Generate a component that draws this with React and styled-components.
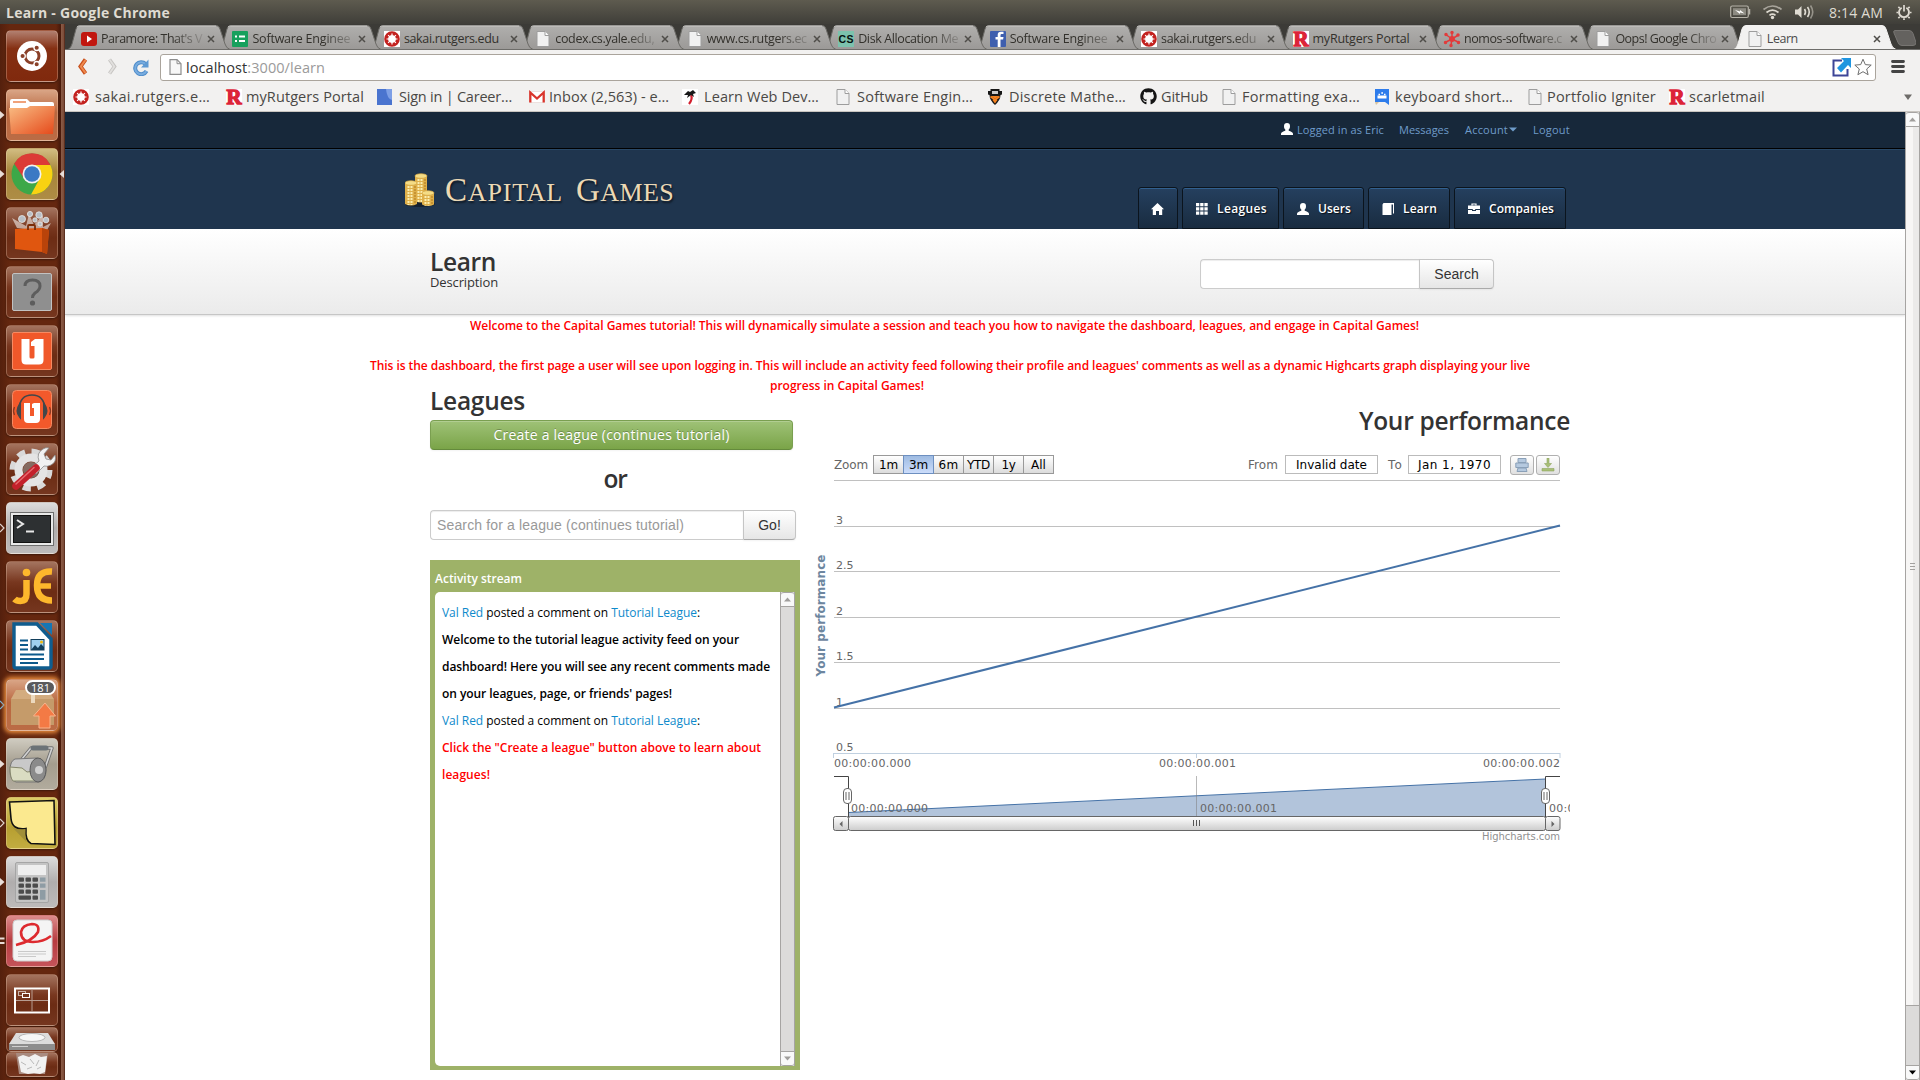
import React, { useLayoutEffect, useRef, useState } from "react";
import styled, { createGlobalStyle, css } from "styled-components";
import { FaGithub } from "react-icons/fa";

const ui = `"Open Sans", "Noto Sans", sans-serif`;
const arial = `"Liberation Sans", Arial, sans-serif`;
const verdana = `"DejaVu Sans", Verdana, sans-serif`;

const Global = createGlobalStyle`
  * { box-sizing: border-box; }
  body { margin: 0; background: #fff; overflow: hidden; font-family: ${ui}; }
  svg { display: block; flex: none; }
`;

/* ---------- text tracked out to a given measure ---------- */
const Span = styled.span`
  display: inline-block;
  white-space: pre;
  flex: none;
`;
function Fit({ w, children, ...rest }) {
  const ref = useRef(null);
  const [ls, setLs] = useState(0);
  useLayoutEffect(() => {
    const natural = ref.current.getBoundingClientRect().width;
    setLs((w - natural) / ref.current.textContent.length);
  }, [w]);
  return (
    <Span ref={ref} style={{ letterSpacing: ls }} {...rest}>
      {children}
    </Span>
  );
}

/* ---------- desktop ---------- */
const Desktop = styled.div`
  width: 1920px;
  height: 1080px;
  display: flex;
  flex-direction: column;
  background: #3c3b37;
`;
const MenuBar = styled.div`
  height: 24px;
  flex: none;
  display: flex;
  align-items: center;
  justify-content: space-between;
  padding: 0 8px 0 6px;
  color: #dfdbd2;
  font-size: 14px;
  background: linear-gradient(#5e5b4f, #3f3e39);
`;
const WindowTitle = styled.div`
  font-weight: 700;
`;
const Indicators = styled.div`
  display: flex;
  align-items: center;
`;
const Slot = styled.span`
  display: flex;
  margin-left: ${(p) => p.$l || 0}px;
`;
const Body = styled.div`
  flex: 1;
  min-height: 0;
  display: flex;
`;

/* ---------- launcher ---------- */
const Launcher = styled.div`
  width: 65px;
  flex: none;
  padding: 6px 0 0 0;
  display: flex;
  flex-direction: column;
  gap: 7px;
  background: linear-gradient(90deg, #54200d 0, #65270f 10px, #65270f 56px, #4b1b0b 60px, #4b1b0b 61px, #8a5c48 61px, #7b4a36 64px, #3d1509 65px);
`;
const LauncherRow = styled.div`
  display: flex;
  align-items: center;
  height: ${(p) => p.$h || 52}px;
  flex: none;
`;
const Mark = styled.div`
  width: 6px;
  height: 12px;
  display: flex;
  align-items: center;
`;
const tile = {
  brown: "linear-gradient(#a4745f, #78371f 40%, #6c2c14 60%, #75361f)",
  ubuntu: "linear-gradient(#b28070, #853013 35%, #80290d)",
  orange: "linear-gradient(#d9a586, #b9673f 45%, #bb6c45)",
  gold: "linear-gradient(#d2bd82, #a7853a 45%, #ae8d45)",
  silver: "linear-gradient(#dcdcdc, #b0adad 50%, #bdbbbb)",
  stone: "linear-gradient(#cfcbc0, #a49d8e 50%, #b1ab9d)",
  yellow: "linear-gradient(#dccc67, #b79f31 60%, #c2ac40)",
  red: "linear-gradient(#dc8b8b, #b83c40 50%, #c4545a)",
};
const Tile = styled.div`
  width: 52px;
  height: ${(p) => p.$h || 52}px;
  flex: none;
  border-radius: 5px;
  border: 1px solid rgba(255, 225, 205, 0.28);
  background: ${(p) => tile[p.$tone]};
  box-shadow: ${(p) => (p.$glow ? "0 0 4px 2px #e98c3c" : "0 1px 2px rgba(0,0,0,.4)")};
  display: flex;
  align-items: center;
  justify-content: center;
  position: relative;
`;
const Count = styled.span`
  position: absolute;
  top: 0;
  right: 1px;
  width: 31px;
  height: 15px;
  border: 2px solid #fff;
  border-radius: 8px;
  background: #5a5a5c;
  color: #fff;
  font-size: 11px;
  line-height: 11px;
  text-align: center;
`;
const Dock = styled.div`
  display: flex;
  flex-direction: column;
  flex: none;
  margin-top: -6px;
  padding-left: 6px;
`;

function LauncherItem({ tone, mark, right, glow, children, count }) {
  return (
    <LauncherRow>
      <Mark>
        {mark && (
          <svg width="6" height="12" viewBox="0 0 6 12">
            {mark === "solid" && <path d="M0 2l4.500 4L0 10z" fill="#e8ddd8" />}
            {mark === "hollow" && <path d="M0 2l4 4-4 4" fill="none" stroke="#e0d4ce" strokeWidth="1.200" />}
            {mark === "blue" && <path d="M0 2l4 4-4 4" fill="none" stroke="#6cb4e4" strokeWidth="1.200" />}
            {mark === "bars" && <path d="M0 3.500h4.500M0 8h4.500" stroke="#e8ddd8" strokeWidth="2.200" />}
          </svg>
        )}
      </Mark>
      <Tile $tone={tone} $glow={glow}>
        {children}
        {count && <Count>{count}</Count>}
      </Tile>
      {right && (
        <svg width="6" height="12" viewBox="0 0 6 12">
          <path d="M6 2L1.500 6 6 10z" fill="#e8ddd8" />
        </svg>
      )}
    </LauncherRow>
  );
}
const Art = ({ children, h = 50 }) => (
  <svg width="50" height={h} viewBox={`0 0 50 ${h}`}>
    {children}
  </svg>
);

function LauncherBar() {
  return (
    <Launcher>
      <LauncherItem tone="ubuntu">
        <Art>
          <circle cx="25" cy="25" r="15" fill="#fff" />
          <circle cx="25" cy="25" r="7" fill="none" stroke="#8a4028" strokeWidth="3" />
          <g fill="#8a4028" stroke="#fff" strokeWidth="1.300">
            <circle cx="15.600" cy="25" r="2.700" />
            <circle cx="29.700" cy="16.800" r="2.700" />
            <circle cx="29.700" cy="33.200" r="2.700" />
          </g>
        </Art>
      </LauncherItem>
      <LauncherItem tone="orange" mark="solid">
        <Art>
          <path d="M3 11q0-2 2-2h15l3 3h22q2 0 2 2v6H3z" fill="#fff" />
          <path d="M6 11h13v2H6z" fill="#f0a27a" />
          <linearGradient id="fold" x2="1" y2="1">
            <stop stopColor="#f9bd84" />
            <stop offset="1" stopColor="#e5491a" />
          </linearGradient>
          <path d="M2 18h18l3-2h25l-2 28H4z" fill="url(#fold)" />
        </Art>
      </LauncherItem>
      <LauncherItem tone="gold" mark="solid" right>
        <Art>
          <circle cx="25" cy="25" r="20.500" fill="#3da848" />
          <path d="M25 25L7.200 14.700A20.500 20.500 0 0 1 42.800 14.700L43 16H25z" fill="#dc3b36" />
          <path d="M25 16H43.400A20.500 20.500 0 0 1 24 45.500L33 29z" fill="#f9d211" />
          <path d="M7.200 14.700L17 29.500 25 25 25 16z" fill="#dc3b36" />
          <circle cx="25" cy="25" r="9.500" fill="#f2f2f2" />
          <circle cx="25" cy="25" r="7.800" fill="#3b79c4" />
        </Art>
      </LauncherItem>
      <LauncherItem tone="brown">
        <Art>
          <path d="M10 20L5 10l14 8 3-12 5 11 9-10v12l8-4-5 9z" fill="#fff" opacity=".55" />
          <g fill="#b9bfc6" stroke="#e9e9e9" strokeWidth=".8">
            <circle cx="15" cy="11" r="3.500" />
            <circle cx="23" cy="6" r="2.600" />
            <circle cx="32" cy="7" r="3.200" />
            <circle cx="39" cy="12" r="2.800" />
            <circle cx="28" cy="12" r="2.200" />
            <circle cx="33" cy="16" r="2" />
          </g>
          <path d="M8 21l27-1 7 2-2 24-5-2-27-3z" fill="#e0560f" />
          <path d="M35 20l7 2-2 24-5-2z" fill="#b9430a" />
          <path d="M21 22v-4q0-1 1-1h5q1 0 1 1v4" fill="none" stroke="#7c2c07" strokeWidth="1.800" />
        </Art>
      </LauncherItem>
      <LauncherItem tone="brown">
        <Art>
          <rect x="5.500" y="6.500" width="39" height="37" rx="1.500" fill="#8f8f8f" stroke="#c2c2c2" />
          <path d="M18 19q0-6 7.500-6t7.500 6q0 4-5 7-2.500 2-2.500 5" fill="none" stroke="#5d5d5d" strokeWidth="3" />
          <circle cx="25.500" cy="36" r="2.600" fill="#5d5d5d" />
        </Art>
      </LauncherItem>
      <LauncherItem tone="brown">
        <Art>
          <rect x="5.500" y="6.500" width="39" height="37" rx="1.500" fill="#f0582a" stroke="#f78a62" />
          <path d="M14.500 13h8v18q0 1.500 1.500 1.500h2Q27.500 32.500 27.500 31V20h-3.500v-4l4-3h8.500v21q0 4.500-4.500 4.500H19q-4.500 0-4.500-4.500z" fill="#fff" />
        </Art>
      </LauncherItem>
      <LauncherItem tone="brown">
        <Art>
          <rect x="5.500" y="5.500" width="39" height="38" rx="4" fill="#f3592b" stroke="#f78a62" />
          <path d="M12 24Q13 10 25 10t13 14" fill="none" stroke="#43474a" strokeWidth="1.600" />
          <path d="M13 19v13q-5-6 0-13zM37 19v13q5-6 0-13z" fill="#43474a" stroke="#43474a" strokeWidth="2" />
          <path d="M7.500 22q-2 4 0 8M42.500 22q2 4 0 8" fill="none" stroke="#8a3a22" strokeWidth="1.300" />
          <path d="M17 18h6v13h4v-8h-2v-4l2-1h6v16q0 4-4 4h-8q-4 0-4-4z" fill="#fff" />
        </Art>
      </LauncherItem>
      <LauncherItem tone="brown">
        <Art>
          <circle cx="24" cy="26" r="18.500" fill="none" stroke="#d9d9d9" strokeWidth="6" strokeDasharray="8 6.530" />
          <circle cx="24" cy="26" r="12.500" fill="none" stroke="#e4e4e4" strokeWidth="8" />
          <circle cx="24" cy="26" r="8" fill="#8f8f8f" opacity=".6" />
          <path d="M23 25l9-8q-3-8 4-12 3-2 6-1l-5 6 2 5 5 1 4-5q2 7-4 10-4 2-7 1l-8 8z" fill="#f2f2f2" stroke="#8b8b8b" strokeWidth=".8" />
          <path d="M9 42L29 24" stroke="#c3212b" strokeWidth="7.500" strokeLinecap="round" />
          <path d="M9 40L27 23.500" stroke="#e66a6e" strokeWidth="1.500" strokeLinecap="round" />
        </Art>
      </LauncherItem>
      <LauncherItem tone="silver" mark="hollow">
        <Art>
          <rect x="3.500" y="9.500" width="43" height="33" fill="#e9e9e9" stroke="#6f6f6f" />
          <rect x="6.500" y="12.500" width="37" height="27" fill="#2d3032" stroke="#111" />
          <path d="M10 17l6 4-6 4" fill="none" stroke="#e8e8e8" strokeWidth="2" />
          <path d="M19 28.500h8" stroke="#e8e8e8" strokeWidth="2" />
        </Art>
      </LauncherItem>
      <LauncherItem tone="brown">
        <Art>
          <g fill="none" stroke="#fdb72c" strokeWidth="6.500">
            <path d="M19.500 18v14q0 7-6 7-4 0-6-2" />
            <path d="M45 9.500q-15-1-15 14t15 15" />
            <path d="M30 24h14" strokeWidth="5.500" />
          </g>
          <circle cx="19.500" cy="10.500" r="3.800" fill="#fdb72c" />
        </Art>
      </LauncherItem>
      <LauncherItem tone="brown">
        <Art>
          <path d="M7 3h23l14 15v27q0 2-2 2H9q-2 0-2-2z" fill="#fff" stroke="#0f5d8f" strokeWidth="3.400" />
          <path d="M33 2h12v12z" fill="#1576b4" />
          <path d="M13 19.500h8M13 24h8M13 28.500h8M13 33.500h24M13 38h24M13 42h18" stroke="#0d5a8c" strokeWidth="2" />
          <rect x="24" y="18.500" width="13" height="10.500" fill="#9ed1f0" stroke="#123f5c" />
          <path d="M24 29l4-5 3 3 3-4 3 3v3z" fill="#123f5c" />
          <circle cx="34.500" cy="21" r="1.500" fill="#f2b90f" />
        </Art>
      </LauncherItem>
      <LauncherItem tone="orange" mark="blue" glow count="181">
        <Art>
          <path d="M9 10h32l6 9v26H4V19z" fill="#d3ac7f" />
          <path d="M4 19h43v26H4z" fill="#c59b6a" />
          <path d="M24 10h4v13h-4z" fill="#ecd9be" />
          <path d="M38 23l10.500 13H43v12H32V36h-5.500z" fill="#f37a45" stroke="#f9b48c" />
        </Art>
      </LauncherItem>
      <LauncherItem tone="stone" mark="solid">
        <Art>
          <path d="M15 20L24 9h21l-7 20" fill="none" stroke="#6f6f6f" strokeWidth="3.400" strokeLinejoin="round" />
          <path d="M15 20L24 9h21l-7 20" fill="none" stroke="#d2d2d2" strokeWidth="1.600" strokeLinejoin="round" />
          <path d="M26 9h13" stroke="#6c7377" strokeWidth="5" strokeLinecap="round" />
          <path d="M8 20l22-1q9 2 9 12 0 10-7 12H9q-6-2-6-11.500T8 20z" fill="#c9c9c9" stroke="#777" />
          <path d="M3 28l12 1 5 4 8-1v10H6q-3-3-3-14z" fill="#dadcc2" stroke="#85866c" />
          <ellipse cx="31" cy="31" rx="8" ry="12" fill="#8b8b8b" stroke="#5c5c5c" />
          <circle cx="32" cy="31" r="4" fill="#d0d0d0" />
        </Art>
      </LauncherItem>
      <LauncherItem tone="yellow" mark="hollow">
        <Art>
          <path d="M2.500 4L47 2.500 48 46.500 24 45.500q-6-3-5-15-14 2-15-10z" fill="#fbe98f" stroke="#111" strokeWidth="1.600" />
          <path d="M4 28q5 5 14.500 3-1 7 1 13z" fill="#a08f39" />
        </Art>
      </LauncherItem>
      <LauncherItem tone="silver" mark="solid">
        <Art>
          <rect x="8.500" y="5.500" width="33" height="40" rx="1.500" fill="#c4c4c4" stroke="#a5a5a5" />
          <rect x="11" y="8" width="28" height="10" fill="#eeeeee" />
          {[0, 1, 2].map((r) =>
            [0, 1, 2].map((c) => <rect key={`${r}${c}`} x={11.5 + c * 7} y={20.5 + r * 6} width="5.500" height="4.300" rx="1" fill="#4c4c4c" />)
          )}
          <rect x="11.500" y="38.500" width="12.500" height="4.300" rx="1" fill="#4c4c4c" />
          <rect x="25.500" y="38.500" width="5.500" height="4.300" rx="1" fill="#4c4c4c" />
          <path d="M33 20.500h5.500v4.300H33zM33 26.500h5.500v4.300H33zM33 33h5.500v9.800H33z" fill="#8e9ca4" />
        </Art>
      </LauncherItem>
      <LauncherItem tone="red" mark="bars">
        <Art>
          <rect x="6" y="4" width="39" height="41" rx="4" fill="#f4f4f4" stroke="#cfcfcf" />
          <path d="M9 29q17-4 22-13 2-8-6-8-10 1-11 8 0 10 12 10 10 0 18-6" fill="none" stroke="#dd2a2f" strokeWidth="2.600" />
          <path d="M11 35.500h28M11 38h28M11 40.500h18" stroke="#c9c9c9" />
        </Art>
      </LauncherItem>
      <LauncherItem tone="brown">
        <Art>
          <rect x="8" y="13.500" width="34" height="24" fill="none" stroke="#fff" strokeWidth="2" />
          <path d="M25 14.500v22M9 25.500h32" stroke="#b79c90" />
          <rect x="11.500" y="16.500" width="7" height="4" fill="none" stroke="#c9b3a9" />
          <rect x="15.500" y="18.500" width="7" height="4" fill="#72341d" stroke="#fff" />
        </Art>
      </LauncherItem>
      <Dock>
        <Tile $tone="brown" $h={25}>
          <Art h={23}>
            <path d="M9 5h32l7 11H2z" fill="#dcdcdc" />
            <ellipse cx="25" cy="9.500" rx="13" ry="4" fill="#f6f6f6" stroke="#b5b5b5" />
            <path d="M2 16h46v6H2z" fill="#8d8d8d" />
            <path d="M5 18.500h16" stroke="#d0d0d0" />
          </Art>
        </Tile>
        <Tile $tone="brown" $h={25}>
          <Art h={23}>
            <path d="M9 0h32l-3 21H12z" fill="#a98b80" />
            <path d="M11 4l5-2 6 2 6-3 6 3 6-1-2 16-5 2-6-1-6 1-7-2z" fill="#f1f1f1" />
            <path d="M14 9l5 3M23 6l4 5M32 7l-3 6M20 16l5-2M34 14l-4 2" stroke="#b9b9b9" />
          </Art>
        </Tile>
      </Dock>
    </Launcher>
  );
}

/* ---------- small favicons ---------- */
const Icon = ({ w = 16, h = 16, children }) => (
  <svg width={w} height={h} viewBox="0 0 16 16" overflow="visible">
    {children}
  </svg>
);
const Favicon = {
  youtube: (
    <Icon>
      <rect y="1" width="16" height="14" rx="3" fill="#c1170f" />
      <path d="M6 4.500l5 3.500-5 3.500z" fill="#fff" />
    </Icon>
  ),
  sheet: (
    <Icon>
      <rect width="16" height="16" rx="1" fill="#17a05d" />
      <path d="M3 5.500h2M7 5.500h6M3 10h2M7 10h6" stroke="#fff" strokeWidth="1.800" />
    </Icon>
  ),
  sakai: (
    <Icon>
      <rect width="16" height="16" fill="#fff" />
      <circle cx="8" cy="8" r="5.800" fill="none" stroke="#c3221f" strokeWidth="4" />
      <path d="M8 2.500v11M2.500 8h11M4.100 4.100l7.800 7.800M11.900 4.100l-7.800 7.800" stroke="#fff" strokeWidth="1.200" />
      <circle cx="8" cy="8" r="3.400" fill="#fff" />
    </Icon>
  ),
  page: (
    <Icon>
      <path d="M2 .5h8l4 4v11H2z" fill="#f1f1f1" stroke="#9d9d9d" />
      <path d="M10 .5v4h4" fill="#fff" stroke="#9d9d9d" />
    </Icon>
  ),
  cs: (
    <Icon>
      <rect width="16" height="16" fill="#7cc2ad" />
      <text x="0.500" y="12" fontFamily="Liberation Sans, sans-serif" fontWeight="700" fontSize="10.500" textLength="15" fill="#06110e">CS</text>
    </Icon>
  ),
  facebook: (
    <Icon>
      <rect width="16" height="16" rx="1" fill="#3f5fae" />
      <path d="M13.500 3h-2q-1 0-1 1.200V6h3l-.4 2.500h-2.600V16H7.700V8.500H5.500V6h2.200V4Q7.700.8 11 .8h2.500z" fill="#fff" />
    </Icon>
  ),
  rutgers: (
    <Icon>
      <rect width="16" height="16" fill="#fff" />
      <text x="0.500" y="14.500" fontFamily="Liberation Serif, serif" fontWeight="700" fontSize="20" textLength="15" lengthAdjust="spacingAndGlyphs" fill="#dc2338" stroke="#dc2338" strokeWidth="1.300">R</text>
    </Icon>
  ),
  nomos: (
    <Icon>
      <g stroke="#e23b3b" strokeWidth="1.500" fill="#e23b3b">
        <path d="M8 8V2M8 8l5.500-3.500M8 8l6 3M8 8l-1 6M8 8l-6 3M8 8L2.500 4" />
        <circle cx="8" cy="8" r="2.200" />
        <circle cx="8" cy="1.500" r="1" /><circle cx="14" cy="4" r="1" /><circle cx="14.500" cy="11.500" r="1" />
        <circle cx="7" cy="14.500" r="1" /><circle cx="1.500" cy="11.500" r="1" /><circle cx="2" cy="3.500" r="1" />
      </g>
    </Icon>
  ),
  blue: (
    <Icon>
      <rect width="15" height="16" fill="#4a74cf" />
      <path d="M9 0h6v11q-5-1-6-11z" fill="#7d9fe6" />
    </Icon>
  ),
  gmail: (
    <Icon>
      <rect x="1" y="2.500" width="14" height="11" fill="#fff" stroke="#e2c9c6" strokeWidth=".5" />
      <path d="M1.300 13.500V3.500L8 9.500l6.700-6v10" fill="none" stroke="#d9342b" strokeWidth="2.300" />
    </Icon>
  ),
  palm: (
    <Icon>
      <rect width="16" height="16" fill="#fff" />
      <path d="M9 6q2 4-2 9" stroke="#d2202e" strokeWidth="2.200" fill="none" />
      <path d="M2 6l4-4 2 1 3-2 3 3-3 1 1 3-3-2-4 3 1-3z" fill="#171717" />
    </Icon>
  ),
  shield: (
    <Icon>
      <path d="M3.500 0h9v2H15v3.500l-1.500.5q0 5-5.500 10Q2.500 11 2.500 6L1 5.500V2h2.500z" fill="#161616" />
      <path d="M4 7h8L8 10zM5.500 11L8 9.500l2.500 1.500L8 14.500z" fill="#f58220" />
      <path d="M5 2h6v3H5z" fill="#c9c9c9" />
      <path d="M3.500 7.500L8 11l4.500-3.500" fill="none" stroke="#f58220" strokeWidth="1.600" />
    </Icon>
  ),
  github: <FaGithub size={17} color="#151515" />,
  keyboard: (
    <Icon>
      <path d="M1 0h14v16l-4-3H1z" fill="#2e7ceb" />
      <path d="M3.500 9.500h9V6.500h-9z" fill="#fff" />
      <path d="M4.500 5.500H6M7.300 4H9M10 5.500h1.500" stroke="#fff" strokeWidth="1.700" />
      <path d="M1 13h4l-3 3z" fill="#d8c29b" />
    </Icon>
  ),
};

/* ---------- browser chrome ---------- */
const Browser = styled.div`
  flex: 1;
  min-width: 0;
  display: flex;
  flex-direction: column;
`;
const TabStrip = styled.div`
  height: 26px;
  flex: none;
  display: flex;
  padding-left: 3px;
  overflow: hidden;
  background: #3c3b37;
  border-bottom: 1px solid #6e6d6a;
`;
const TabCell = styled.div`
  flex: 0 0 151.45px;
  height: 25px;
  position: relative;
  z-index: ${(p) => p.$z};
  display: flex;
  align-items: center;
  padding: 4px 0 0 13px;
  font-size: 12.5px;
  color: ${(p) => (p.$on ? "#4b4b4b" : "#33312c")};
`;
const TabShape = styled.svg`
  position: absolute;
  left: 0;
  top: 1px;
  z-index: -1;
`;
const TabText = styled.div`
  width: 102px;
  margin-left: 4px;
  line-height: 18px;
  ${(p) =>
    p.$fade &&
    css`
      mask-image: linear-gradient(90deg, #000 70%, rgba(0, 0, 0, 0.15) 100%);
    `}
`;
const NewTab = styled.div`
  padding: 6px 0 0 2px;
`;
const Toolbar = styled.div`
  height: 32px;
  flex: none;
  display: flex;
  align-items: center;
  padding: 2px 15px 0 9px;
  background: #f2f1f0;
`;
const Omnibox = styled.div`
  width: 1718px;
  height: 27px;
  margin-left: 10px;
  padding: 0 3px 0 8px;
  display: flex;
  align-items: center;
  border: 1px solid #aaa49c;
  border-radius: 3px;
  background: #fff;
  font-size: 14.5px;
  color: #333;
`;
const Url = styled.div`
  flex: 1;
  padding-left: 4px;
  color: #9a9a9a;
  b {
    font-weight: 400;
    color: #333;
  }
`;
const Bookmarks = styled.div`
  height: 30px;
  flex: none;
  display: flex;
  align-items: center;
  background: #f2f1f0;
  border-bottom: 1px solid #c9c5c0;
  color: #4a4845;
  font-size: 14.5px;
`;
const Bookmark = styled.div`
  flex: none;
  width: ${(p) => p.$w}px;
  display: flex;
  align-items: center;
`;
const BookmarkIcon = styled.span`
  display: flex;
  width: ${(p) => p.$w}px;
  flex: none;
`;

const tabs = [
  ["youtube", "Paramore: That's V", 101, true],
  ["sheet", "Software Enginee", 98, true],
  ["sakai", "sakai.rutgers.edu", 95],
  ["page", "codex.cs.yale.edu,", 99, true],
  ["page", "www.cs.rutgers.ec", 100, true],
  ["cs", "Disk Allocation Me", 100, true],
  ["facebook", "Software Enginee", 98, true],
  ["sakai", "sakai.rutgers.edu", 95, true],
  ["rutgers", "myRutgers Portal", 97],
  ["nomos", "nomos-software.c", 98, true],
  ["page", "Oops! Google Chro", 101, true],
  ["page", "Learn", 31],
];
/* icon, label, icon x, text x, text width */
const marks = [
  ["sakai", "sakai.rutgers.e…", 73, 95, 115],
  ["rutgers", "myRutgers Portal", 226, 246, 118],
  ["blue", "Sign in | Career…", 377, 399, 113],
  ["gmail", "Inbox (2,563) - e…", 529, 549, 120],
  ["palm", "Learn Web Dev…", 682, 704, 115],
  ["page", "Software Engin…", 835, 857, 116],
  ["shield", "Discrete Mathe…", 987, 1009, 117],
  ["github", "GitHub", 1140, 1161, 47],
  ["page", "Formatting exa…", 1221, 1242, 118],
  ["keyboard", "keyboard short…", 1374, 1395, 118],
  ["page", "Portfolio Igniter", 1527, 1547, 109],
  ["rutgers", "scarletmail", 1669, 1689, 76],
];

function Chrome() {
  return (
    <>
      <TabStrip>
        {tabs.map(([icon, text, w, fade], i) => {
          const on = i === tabs.length - 1;
          return (
            <TabCell key={i} $z={on ? 30 : 20 - i} $on={on}>
              <TabShape width="165" height="25" viewBox="0 0 165 25">
                <linearGradient id="tabfill" x2="0" y2="1">
                  <stop stopColor="#b0afad" />
                  <stop offset="1" stopColor="#9b9997" />
                </linearGradient>
                <path
                  d="M0 24.500Q3 23 4 19L8 4Q9 .5 12 .5H148Q151 .5 152 4l5 15q1 4 5 5.500z"
                  fill={on ? "#f2f1f0" : "url(#tabfill)"}
                  stroke={on ? "#f2f1f0" : "#6c6b67"}
                />
                {!on && <path d="M9 2q1-1 3-1H148" stroke="#c9c8c6" fill="none" />}
              </TabShape>
              {Favicon[icon]}
              <TabText $fade={fade}>
                <Fit w={w}>{text}</Fit>
              </TabText>
              <Slot $l={4}>
                <svg width="8" height="8" viewBox="0 0 8 8">
                  <path d="M1 1l6 6M7 1L1 7" stroke="#4f4d49" strokeWidth="1.500" />
                </svg>
              </Slot>
            </TabCell>
          );
        })}
        <NewTab>
          <svg width="29" height="17" viewBox="0 0 29 17">
            <path d="M8 .5h14q3 0 4 3l3 9q0 3-3 3H15q-3 0-4-3L7 3Q6 .5 8 .5z" fill="#64625f" stroke="#777572" />
          </svg>
        </NewTab>
      </TabStrip>
      <Toolbar>
        <svg width="16" height="20" viewBox="0 0 16 20">
          <path d="M11.500 2.500L6.500 9.500l5 7" fill="none" stroke="#c8501c" strokeWidth="4" />
          <path d="M11.500 3L6.800 9.500l4.700 6.500" fill="none" stroke="#f08a4e" strokeWidth="2" />
        </svg>
        <Slot $l={15}>
          <svg width="16" height="20" viewBox="0 0 16 20">
            <path d="M4.500 2.500L9.500 9.500l-5 7" fill="none" stroke="#c6c4c1" strokeWidth="3.600" />
            <path d="M4.500 2.500L9.300 9.500l-4.800 7" fill="none" stroke="#e2e0de" strokeWidth="1.800" />
          </svg>
        </Slot>
        <Slot $l={11}>
          <svg width="18" height="18" viewBox="0 0 18 18">
            <path d="M13.500 6A6 6 0 1 0 14.500 13" fill="none" stroke="#4f8cc9" strokeWidth="4" />
            <path d="M13.500 6A6 6 0 1 0 14.500 13" fill="none" stroke="#78acdf" strokeWidth="2" />
            <path d="M16.500 1.500v8H9z" fill="#5f9ad3" />
          </svg>
        </Slot>
        <Omnibox>
          <svg width="13" height="16" viewBox="0 0 13 16">
            <path d="M1 .7h7l4 4v10.600H1z" fill="#f7f7f7" stroke="#8e8e8e" strokeWidth="1.200" />
            <path d="M8 .7v4h4" fill="none" stroke="#8e8e8e" />
          </svg>
          <Url>
            <Fit w={139}>
              <b>localhost</b>:3000/learn
            </Fit>
          </Url>
          <svg width="20" height="20" viewBox="0 0 20 20">
            <path d="M10 3.500H1.500v15h14V12" fill="#fff" stroke="#3d4597" strokeWidth="2" />
            <path d="M9 1h10v10l-3-3-7 7.500L5 11l7-7z" fill="#1f95e0" />
          </svg>
          <Slot $l={2}>
            <svg width="18" height="18" viewBox="0 0 18 18">
              <path d="M9 1.200l2.300 5.400 5.900.5-4.500 3.900 1.400 5.700L9 13.700l-5.100 3 1.400-5.700L.8 7.100l5.900-.5z" fill="#fff" stroke="#6e6e6e" />
            </svg>
          </Slot>
        </Omnibox>
        <Slot $l={15}>
          <svg width="14" height="14" viewBox="0 0 14 14">
            <path d="M1.500 1.500h11M1.500 6.500h11M1.500 11.500h11" stroke="#444" strokeWidth="2.800" strokeLinecap="round" />
          </svg>
        </Slot>
      </Toolbar>
      <Bookmarks>
        <Bookmark $w={8} />
        {marks.map(([icon, label, ix, tx, w], i) => (
          <Bookmark key={i} $w={(marks[i + 1] ? marks[i + 1][2] : 1903) - ix}>
            <BookmarkIcon $w={tx - ix}>{Favicon[icon]}</BookmarkIcon>
            <Fit w={w}>{label}</Fit>
          </Bookmark>
        ))}
        <svg width="10" height="8" viewBox="0 0 10 8">
          <path d="M1 1.500h8L5 7z" fill="#6e6c69" />
        </svg>
      </Bookmarks>
    </>
  );
}

/* ---------- scrollbars ---------- */
const Bar = styled.div`
  width: 15px;
  flex: none;
  display: flex;
  flex-direction: column;
  background: #dcdbda;
  border: solid #a6a4a2;
  border-width: 0 1px;
`;
const BarButton = styled.div`
  height: 15px;
  flex: none;
  display: flex;
  align-items: center;
  justify-content: center;
  background: #f9f9f9;
  border: solid #a6a4a2;
  border-width: 1px 0;
  border-radius: ${(p) => (p.$end ? "0 0 3px 3px" : "3px 3px 0 0")};
`;
const BarSpace = styled.div`
  flex: 1;
`;
const Thumb = styled.div`
  height: 879px;
  flex: none;
  display: flex;
  align-items: center;
  justify-content: center;
  background: linear-gradient(90deg, #f7f6f5 7px, #ebeae9 7px);
  border-bottom: 1px solid #a6a4a2;
`;
const Arrow = ({ down, dark }) => (
  <svg width="7" height="5" viewBox="0 0 7 5">
    <path d={down ? "M0 .5h7L3.500 4.500z" : "M0 4.500h7L3.500.5z"} fill={dark ? "#000" : "#a09e9c"} />
  </svg>
);

/* ---------- page ---------- */
const Viewport = styled.div`
  flex: 1;
  min-height: 0;
  display: flex;
  background: #fff;
`;
const Page = styled.div`
  flex: 1;
  min-width: 0;
  overflow: hidden;
`;
const AccountBar = styled.div`
  height: 37px;
  display: flex;
  align-items: center;
  padding: 0 0 2px 1216px;
  background: #17283a;
  border-bottom: 1px solid #000;
  color: #6f9cca;
  font-size: 11px;
`;
const Header = styled.div`
  height: 80px;
  display: flex;
  align-items: flex-end;
  background: #1f354e;
  border-top: 1px solid #294866;
`;
const Brand = styled.div`
  width: 733px;
  height: 56px;
  margin-left: 340px;
  display: flex;
  align-items: flex-start;
`;
const Wordmark = styled.div`
  display: flex;
  gap: 13px;
  margin: -2px 0 0 9px;
  align-items: baseline;
  font-family: "Liberation Serif", serif;
  font-size: 26px;
  line-height: 38px;
  color: #ecd9b5;
  text-shadow: 1px 2px 2px rgba(0, 0, 0, 0.6);
`;
const Initial = styled.span`
  font-size: 33px;
`;
const Nav = styled.div`
  display: flex;
  gap: 4px;
`;
const NavButton = styled.div`
  width: ${(p) => p.$w}px;
  height: 42px;
  display: flex;
  align-items: center;
  padding: 1px 0 0 ${(p) => p.$pl || 13}px;
  border: 1px solid #0b141d;
  border-radius: 3px 3px 0 0;
  background: linear-gradient(#25405f, #192c40);
  box-shadow: inset 0 1px 0 #31608f;
  color: #fff;
  font-size: 12px;
  font-weight: 600;
  text-shadow: 1px 1px 1px rgba(0, 0, 0, 0.7);
`;
const NavLabel = styled.span`
  margin: -1px 0 0 9px;
`;
const SubHeader = styled.div`
  height: 86px;
  display: flex;
  padding-left: 365px;
  background: linear-gradient(#fff, #ebebeb);
  border-bottom: 1px solid #c6c6c6;
  box-shadow: 0 1px 2px rgba(0, 0, 0, 0.12);
`;
const Titles = styled.div`
  width: 770px;
  padding-top: 20px;
  color: #333;
`;
const H3 = styled.h3`
  margin: 0;
  font-size: 24.5px;
  line-height: ${(p) => p.$lh || 40}px;
  font-weight: 600;
  color: #333;
  text-align: ${(p) => p.$align || "left"};
`;
const Description = styled.div`
  font-size: 13px;
  line-height: 14px;
`;
const InputGroup = styled.div`
  display: flex;
  height: 30px;
  margin-top: ${(p) => p.$mt}px;
  font: 14px ${arial};
`;
const Field = styled.div`
  width: ${(p) => p.$w}px;
  padding: 0 6px;
  line-height: 28px;
  border: 1px solid #ccc;
  border-right: 0;
  border-radius: 4px 0 0 4px;
  background: #fff;
  box-shadow: inset 0 1px 1px rgba(0, 0, 0, 0.075);
  color: #999;
`;
const AddOn = styled.div`
  width: ${(p) => p.$w}px;
  text-align: center;
  line-height: 28px;
  border: 1px solid #c5c5c5;
  border-bottom-color: #aaa;
  border-radius: 0 4px 4px 0;
  background: linear-gradient(#fff, #e6e6e6);
  box-shadow: 0 1px 2px rgba(0, 0, 0, 0.05);
  color: #333;
`;
const Notices = styled.div`
  padding-top: 1px;
`;
const Notice = styled.p`
  margin: 0 0 ${(p) => p.$mb || 0}px;
  padding-left: ${(p) => p.$pl}px;
  font-size: 12px;
  font-weight: 600;
  line-height: 20px;
  color: #f00;
`;
const Columns = styled.div`
  display: flex;
  margin: -15px 0 0 365px;
`;
const Left = styled.div`
  width: 370px;
`;
const Right = styled.div`
  width: 756px;
  margin: 20px 0 0 14px;
`;
const CreateButton = styled.div`
  width: 363px;
  height: 30px;
  margin-top: -1px;
  padding-bottom: 1px;
  display: flex;
  align-items: center;
  justify-content: center;
  border: 1px solid #7a9f50;
  border-bottom-color: #648a3c;
  border-radius: 4px;
  background: linear-gradient(#9fc277, #7aa448);
  box-shadow: inset 0 1px 0 rgba(255, 255, 255, 0.2), 0 1px 2px rgba(0, 0, 0, 0.05);
  color: #fff;
  font-size: 14px;
  text-shadow: 0 -1px 0 rgba(0, 0, 0, 0.25);
`;
const Or = styled.div`
  padding-top: 9px;
`;
const Panel = styled.div`
  height: 510px;
  margin-top: 20px;
  padding: 0 5px 4px;
  display: flex;
  flex-direction: column;
  background: #9eb268;
`;
const PanelTitle = styled.div`
  height: 32px;
  padding-top: 9px;
  font-size: 12px;
  line-height: 20px;
  font-weight: 600;
  color: #fff;
`;
const Feed = styled.div`
  flex: 1;
  display: flex;
  border-radius: 5px 0 0 5px;
  background: #fff;
  overflow: hidden;
`;
const FeedText = styled.div`
  flex: 1;
  padding: 7px 0 0 7px;
  font-size: 12px;
  line-height: 27px;
  color: #000;
  a {
    color: #0e8acb;
  }
`;
const Strong = styled.div`
  font-weight: 600;
  color: ${(p) => p.$c || "#000"};
`;
const RangeRow = styled.div`
  display: flex;
  height: 39px;
  padding: 14px 0 0 20px;
  font: 12px/20px ${verdana};
  color: #666;
`;
const RangeButtons = styled.div`
  display: flex;
  height: 19px;
  margin-left: 5px;
`;
const RangeButton = styled.div`
  width: 31px;
  margin-right: -1px;
  display: flex;
  justify-content: center;
  line-height: 18px;
  border: 1px solid #999;
  color: #000;
  background: ${(p) => (p.$on ? "linear-gradient(#9ebbe2, #cbdcfa)" : "linear-gradient(#fff, #dcdcdc)")};
  ${(p) => p.$on && "border-color:#6d8fc0; z-index:1;"}
`;
const DateBox = styled.div`
  width: 93px;
  height: 19px;
  margin: 0 ${(p) => p.$mr}px 0 ${(p) => p.$ml}px;
  display: flex;
  justify-content: center;
  line-height: 18px;
  border: 1px solid #bbb;
  color: #000;
`;
const Export = styled.div`
  width: 24px;
  height: 20px;
  margin-right: 2px;
  display: flex;
  align-items: center;
  justify-content: center;
  border: 1px solid #b0b0b0;
  border-radius: 3px;
  background: linear-gradient(#fff, #e0e0e0);
`;

const UserIcon = ({ s = 12 }) => (
  <svg width={s} height={s} viewBox="0 0 12 12">
    <path d="M6 0c2 0 3 1.200 3 3.200C9 5 8.300 6 7.700 6.600v1.200c2 .8 4.300 1.400 4.300 3V12H0v-1.200c0-1.600 2.300-2.200 4.300-3V6.600C3.700 6 3 5 3 3.200 3 1.200 4 0 6 0z" fill="#fff" />
  </svg>
);

const ranges = [["1m", 19], ["3m", 19], ["6m", 20], ["YTD", 23], ["1y", 14], ["All", 15]];

function Chart() {
  const grid = [0.5, 46.5, 91.5, 137.5, 182.5, 228.5];
  const labels = [["3", 44], ["2.5", 89], ["2", 135], ["1.5", 180], ["1", 226], ["0.5", 271]];
  const L = 20;
  const R = 746;
  return (
    <svg width="756" height="370" viewBox="0 0 756 370" fontFamily="DejaVu Sans, Verdana, sans-serif" fontSize="11" fill="#666">
      {grid.map((y) => (
        <path key={y} d={`M${L} ${y}H${R}`} stroke="#c0c0c0" />
      ))}
      <path d={`M${L} 273.500H${R}M19.500 273v5M382.500 273v5M746 273v5`} stroke="#c0d0e0" fill="none" />
      <text transform="translate(10.500 196.500) rotate(-90)" fontWeight="700" fontSize="12" fill="#6d869f" textLength="122">
        Your performance
      </text>
      {labels.map(([t, y]) => (
        <text key={t} x="22" y={y}>{t}</text>
      ))}
      <path d={`M${L} 227.500L${R} 45.500`} stroke="#4572a7" strokeWidth="2" />
      <text x="20" y="287" textLength="77">00:00:00.000</text>
      <text x="345" y="287" textLength="77">00:00:00.001</text>
      <text x="669" y="287" textLength="77">00:00:00.002</text>
      {/* navigator */}
      <path d="M34.500 332.500L731.500 299v38h-697z" fill="#b2c4db" />
      <path d="M34.500 332.500L731.500 299" stroke="#4572a7" />
      <path d="M382.500 296v41" stroke="#808080" strokeOpacity=".55" />
      <text x="37" y="332" textLength="77">00:00:00.000</text>
      <text x="386" y="332" textLength="77">00:00:00.001</text>
      <text x="735" y="332" textLength="77">00:00:00.002</text>
      <path d="M20 296.500h14.500V337M746 296.500h-14.500V337" stroke="#444" fill="none" />
      {[33.5, 731.5].map((x) => (
        <g key={x}>
          <rect x={x - 4} y="308.500" width="8" height="15" rx="3.500" fill="#fff" stroke="#666" />
          <path d={`M${x - 1.5} 312v8M${x + 1.5} 312v8`} stroke="#666" />
        </g>
      ))}
      <linearGradient id="bar" x2="0" y2="1">
        <stop stopColor="#fff" />
        <stop offset="1" stopColor="#cccccc" />
      </linearGradient>
      <g fill="url(#bar)" stroke="#666">
        <rect x="34.500" y="336.500" width="697" height="14" rx="2" />
        <rect x="19.500" y="336.500" width="15" height="14" rx="2" />
        <rect x="731.500" y="336.500" width="14.500" height="14" rx="2" />
      </g>
      <path d="M28.500 341v6l-3-3zM737.500 341v6l3-3z" fill="#666" />
      <path d="M379.500 340v6M382.500 340v6M385.500 340v6" stroke="#555" />
      <text x="668" y="360" fontSize="10" fill="#909090" textLength="78">Highcharts.com</text>
    </svg>
  );
}

function SitePage() {
  return (
    <Page>
      <AccountBar>
        <UserIcon />
        <Slot $l={4}><Fit w={87}>Logged in as Eric</Fit></Slot>
        <Slot $l={15}><Fit w={50}>Messages</Fit></Slot>
        <Slot $l={16}><Fit w={43}>Account</Fit></Slot>
        <Slot $l={1}>
          <svg width="8" height="5" viewBox="0 0 8 5"><path d="M0 .5h8L4 4.500z" fill="#6f9cca" /></svg>
        </Slot>
        <Slot $l={16}><Fit w={37}>Logout</Fit></Slot>
      </AccountBar>
      <Header>
        <Brand>
          <svg width="31" height="34" viewBox="0 0 31 34">
            <ellipse cx="15" cy="31" rx="15" ry="3" fill="#14202e" />
            {[[10, 3, 28], [0, 10, 31], [17, 20, 31.5]].map(([x, t, b]) => (
              <g key={x}>
                <path d={`M${x} ${t}v${b - t}q6 3 12 0V${t}z`} fill="#dfb04a" />
                <path d={`M${x + 3.5} ${t}v${b - t + 1}M${x + 6.5} ${t}v${b - t + 1}`} stroke="#fbeeb0" strokeWidth="2" strokeDasharray="2 1" />
                <path d={`M${x + 10} ${t}v${b - t}`} stroke="#c08a2c" strokeWidth="1.500" strokeDasharray="2 1" />
                <ellipse cx={x + 6} cy={t} rx="6" ry="2.300" fill="#f4dc86" stroke="#d5a540" strokeWidth=".7" />
              </g>
            ))}
          </svg>
          <Wordmark>
            <Fit w={118}><Initial>C</Initial>APITAL</Fit>
            <Fit w={98}><Initial>G</Initial>AMES</Fit>
          </Wordmark>
        </Brand>
        <Nav>
          <NavButton $w={40} $pl={12}>
            <svg width="13" height="12" viewBox="0 0 13 12"><path d="M6.500 0L13 6.300h-1.800V12H8V8H5v4H1.800V6.300H0z" fill="#fff" /></svg>
          </NavButton>
          <NavButton $w={97}>
            <svg width="12" height="12" viewBox="0 0 12 12">
              <path d="M0 0h3.300v3.300H0zM4.200 0h3.300v3.300H4.200zM8.400 0h3.300v3.300H8.400zM0 4.200h3.300v3.300H0zM4.200 4.200h3.300v3.300H4.200zM8.400 4.200h3.300v3.300H8.400zM0 8.400h3.300v3.300H0zM4.200 8.400h3.300v3.300H4.200zM8.400 8.400h3.300v3.300H8.400z" fill="#fff" />
            </svg>
            <NavLabel><Fit w={50}>Leagues</Fit></NavLabel>
          </NavButton>
          <NavButton $w={81}>
            <UserIcon />
            <NavLabel><Fit w={33}>Users</Fit></NavLabel>
          </NavButton>
          <NavButton $w={82}>
            <svg width="12" height="12" viewBox="0 0 12 12"><path d="M1.500 0H12v10.500h-1V1.500H9.500V12H.5V1.500z" fill="#fff" /></svg>
            <NavLabel><Fit w={34}>Learn</Fit></NavLabel>
          </NavButton>
          <NavButton $w={112}>
            <svg width="12" height="12" viewBox="0 0 12 12">
              <path d="M4 2.500V1h4v1.500" fill="none" stroke="#fff" strokeWidth="1.200" />
              <path d="M0 2.500h12V6H7.200v1H4.800V6H0zM0 7h4v1h4V7h4v4H0z" fill="#fff" />
            </svg>
            <NavLabel><Fit w={65}>Companies</Fit></NavLabel>
          </NavButton>
        </Nav>
      </Header>
      <SubHeader>
        <Titles>
          <H3 $lh={26}><Fit w={66}>Learn</Fit></H3>
          <Description><Fit w={68}>Description</Fit></Description>
        </Titles>
        <InputGroup $mt={30}>
          <Field $w={219} />
          <AddOn $w={75}>Search</AddOn>
        </InputGroup>
      </SubHeader>
      <Notices>
        <Notice $pl={405} $mb={20}>
          <Fit w={949}>Welcome to the Capital Games tutorial! This will dynamically simulate a session and teach you how to navigate the dashboard, leagues, and engage in Capital Games!</Fit>
        </Notice>
        <Notice $pl={305}>
          <Fit w={1160}>This is the dashboard, the first page a user will see upon logging in. This will include an activity feed following their profile and leagues' comments as well as a dynamic Highcarts graph displaying your live</Fit>
        </Notice>
        <Notice $pl={705}>
          <Fit w={154}>progress in Capital Games!</Fit>
        </Notice>
      </Notices>
      <Columns>
        <Left>
          <H3><Fit w={95}>Leagues</Fit></H3>
          <CreateButton><Fit w={236}>Create a league (continues tutorial)</Fit></CreateButton>
          <Or><H3 $align="center"><Fit w={23}>or</Fit></H3></Or>
          <InputGroup $mt={11}>
            <Field $w={313}><Fit w={247}>Search for a league (continues tutorial)</Fit></Field>
            <AddOn $w={53}>Go!</AddOn>
          </InputGroup>
          <Panel>
            <PanelTitle><Fit w={87}>Activity stream</Fit></PanelTitle>
            <Feed>
              <FeedText>
                <div><Fit w={258}><a>Val Red</a> posted a comment on <a>Tutorial League</a>:</Fit></div>
                <Strong><Fit w={297}>Welcome to the tutorial league activity feed on your</Fit></Strong>
                <Strong><Fit w={328}>dashboard! Here you will see any recent comments made</Fit></Strong>
                <Strong><Fit w={230}>on your leagues, page, or friends' pages!</Fit></Strong>
                <div><Fit w={258}><a>Val Red</a> posted a comment on <a>Tutorial League</a>:</Fit></div>
                <Strong $c="#f00"><Fit w={319}>Click the "Create a league" button above to learn about</Fit></Strong>
                <Strong $c="#f00"><Fit w={48}>leagues!</Fit></Strong>
              </FeedText>
              <Bar>
                <BarButton><Arrow /></BarButton>
                <BarSpace />
                <BarButton $end><Arrow down /></BarButton>
              </Bar>
            </Feed>
          </Panel>
        </Left>
        <Right>
          <H3 $align="right"><Fit w={211}>Your performance</Fit></H3>
          <RangeRow>
            <Fit w={34}>Zoom</Fit>
            <RangeButtons>
              {ranges.map(([t, w]) => (
                <RangeButton key={t} $on={t === "3m"}><Fit w={w}>{t}</Fit></RangeButton>
              ))}
            </RangeButtons>
            <Slot $l={195}><Fit w={30}>From</Fit></Slot>
            <DateBox $ml={7} $mr={10}><Fit w={71}>Invalid date</Fit></DateBox>
            <Fit w={15}>To</Fit>
            <DateBox $ml={5} $mr={9}><Fit w={73}>Jan 1, 1970</Fit></DateBox>
            <Export>
              <svg width="14" height="14" viewBox="0 0 14 14">
                <path d="M3 .5h8v4H3zM.8 5h12.400v4.500H.8zM3 10h8l1 3.500H2z" fill="#b5c9df" stroke="#8aa0b8" />
              </svg>
            </Export>
            <Export>
              <svg width="14" height="14" viewBox="0 0 14 14">
                <path d="M6 0h2v5.500h2.500L7 9.500 3.500 5.500H6zM1 10.500h12V13H1z" fill="#a8bf77" stroke="#8fa45f" strokeWidth=".6" />
              </svg>
            </Export>
          </RangeRow>
          <Chart />
        </Right>
      </Columns>
    </Page>
  );
}

export default function App() {
  return (
    <Desktop>
      <Global />
      <MenuBar>
        <WindowTitle><Fit w={164}>Learn - Google Chrome</Fit></WindowTitle>
        <Indicators>
          <svg width="21" height="14" viewBox="0 0 21 14">
            <rect x=".7" y="1" width="17.600" height="11.500" rx="1.500" fill="none" stroke="#b5b2a8" strokeWidth="1.200" />
            <rect x="3" y="3.200" width="13" height="7" fill="#8d8b82" />
            <path d="M5 5l5 1.500V5l4.500 3.500L10 7.500V9z" fill="#fff" />
            <path d="M19.500 4v5.500" stroke="#b5b2a8" strokeWidth="1.500" />
          </svg>
          <Slot $l={11}>
            <svg width="21" height="16" viewBox="0 0 21 16">
              <g fill="none" stroke="#dfdbd2" strokeWidth="1.700">
                <path d="M1.500 5.500q9-7 18 0" opacity=".6" />
                <path d="M4.500 8.500q6-4.800 12 0" />
                <path d="M7.500 11.300q3-2.400 6 0" />
              </g>
              <circle cx="10.500" cy="13.500" r="1.700" fill="#dfdbd2" />
            </svg>
          </Slot>
          <Slot $l={11}>
            <svg width="22" height="16" viewBox="0 0 22 16">
              <path d="M1 5.500h3l3.500-3.500v12L4 10.500H1z" fill="#dfdbd2" />
              <g fill="none" stroke="#dfdbd2" strokeWidth="1.600">
                <path d="M10.500 5q2 3 0 6" />
                <path d="M13.500 3q3.500 5 0 10" />
                <path d="M16.500 1.500q4.500 6.500 0 13" opacity=".5" />
              </g>
            </svg>
          </Slot>
          <Slot $l={13}><Fit w={54}>8:14 AM</Fit></Slot>
          <Slot $l={13}>
            <svg width="16" height="17" viewBox="0 0 17 17">
              <path d="M6 3.500a5.300 5.300 0 1 0 5 0" fill="none" stroke="#dfdbd2" strokeWidth="2" />
              <path d="M8.500.5v7M2.500 2.500l1.500 1.500M14.500 2.500L13 4M.5 8.500h2M14.500 8.500h2M2.500 14.500L4 13M14.500 14.500L13 13M8.500 14.500v2" stroke="#dfdbd2" strokeWidth="1.800" />
            </svg>
          </Slot>
        </Indicators>
      </MenuBar>
      <Body>
        <LauncherBar />
        <Browser>
          <Chrome />
          <Viewport>
            <SitePage />
            <Bar>
              <BarButton><Arrow /></BarButton>
              <Thumb>
                <svg width="5" height="7" viewBox="0 0 5 7"><path d="M0 .5h5M0 3.500h5M0 6.500h5" stroke="#a3a19f" /></svg>
              </Thumb>
              <BarSpace />
              <BarButton $end><Arrow down dark /></BarButton>
            </Bar>
          </Viewport>
        </Browser>
      </Body>
    </Desktop>
  );
}
